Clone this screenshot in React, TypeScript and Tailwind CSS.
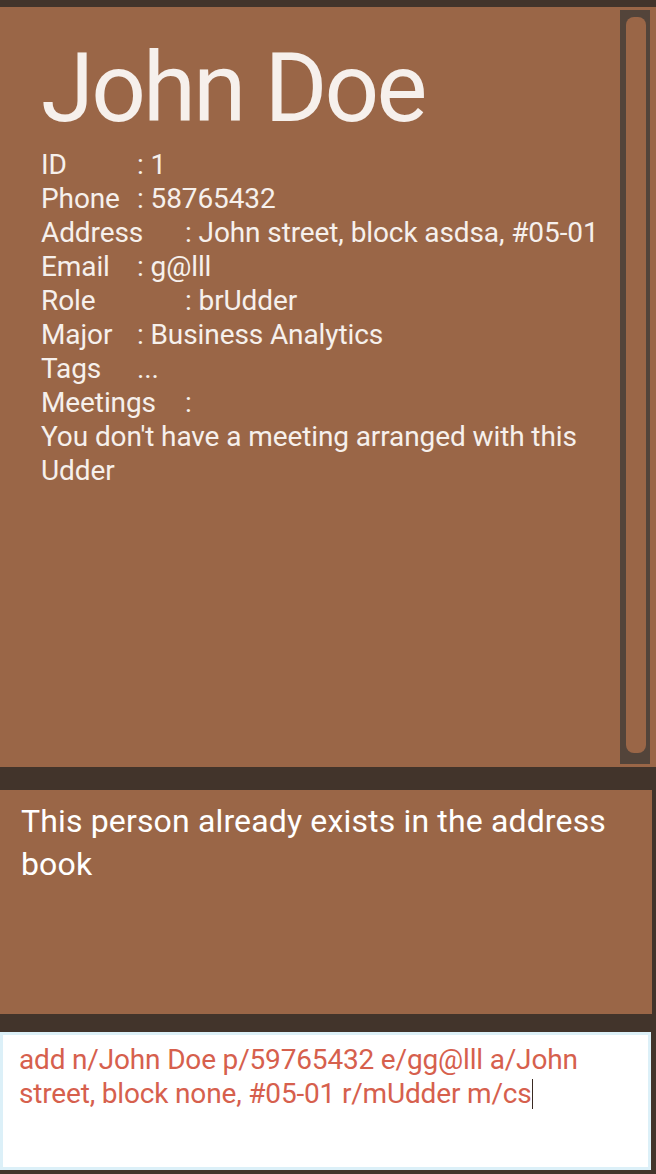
const rows: { label: string; w: string; value: string }[] = [
  { label: "ID", w: "w-[96px]", value: ": 1" },
  { label: "Phone", w: "w-[96px]", value: ": 58765432" },
  { label: "Address", w: "w-[144px]", value: ": John street, block asdsa, #05-01" },
  { label: "Email", w: "w-[96px]", value: ": g@lll" },
  { label: "Role", w: "w-[144px]", value: ": brUdder" },
  { label: "Major", w: "w-[96px]", value: ": Business Analytics" },
  { label: "Tags", w: "w-[96px]", value: "..." },
  { label: "Meetings", w: "w-[144px]", value: ":" },
];

export default function App() {
  return (
    <div
      className="w-[656px] h-[1174px] bg-[#42342b] flex flex-col pt-[7px] overflow-hidden"
      style={{ fontFamily: "Roboto, 'Noto Sans', sans-serif" }}
    >
      {/* person detail panel */}
      <div className="h-[760px] bg-[#9a6647] flex pr-[6px] py-[3px]">
        <div className="flex-1 pl-[41px] pt-[19px] text-[#f6f0ec]">
          <div className="text-[96px] leading-[119px] tracking-[-2.8px]">John Doe</div>
          <div className="text-[28px] leading-[34px] tracking-[-0.1px]">
            {rows.map((r) => (
              <div key={r.label} className="flex">
                <span className={r.w}>{r.label}</span>
                <span>{r.value}</span>
              </div>
            ))}
            <div className="w-[560px]">You don't have a meeting arranged with this Udder</div>
          </div>
        </div>
        <div className="w-[30px] bg-[#53443a] pl-[6px] pr-[4px] pt-[7px] pb-[11px]">
          <div className="h-full bg-[#9a6647] rounded-[8px]" />
        </div>
      </div>

      <div className="h-[23px]" />

      {/* result display */}
      <div className="h-[224px] w-[652px] bg-[#9a6647] px-[21px] pt-[10px] text-white text-[32px] leading-[43px] tracking-[0.15px]">
        This person already exists in the address book
      </div>

      <div className="h-[18px]" />

      {/* command box */}
      <div className="h-[138px] w-[651px] bg-white border-[3px] border-[#dcf0f8] px-[16px] pt-[8px] text-[#d6604d] text-[28px] leading-[34px] tracking-[-0.17px]">
        add n/John Doe p/59765432 e/gg@lll a/John street, block none, #05-01 r/mUdder m/cs
        <span className="inline-block w-[1px] h-[30px] bg-[#3a2a22] align-middle -mt-[4px]" />
      </div>
    </div>
  );
}
